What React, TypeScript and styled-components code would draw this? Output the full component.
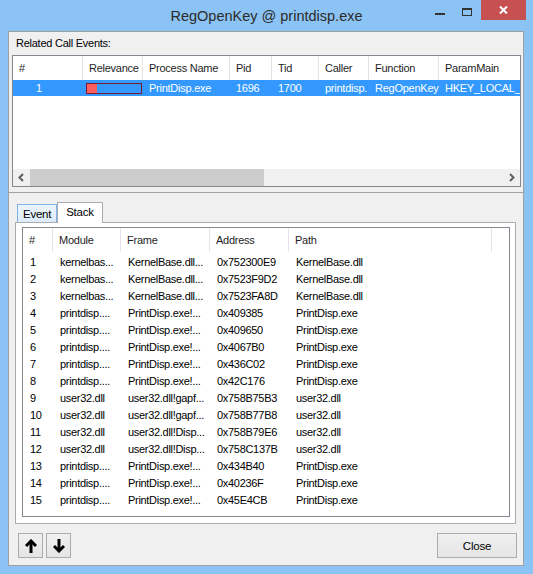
import React from "react";
import styled, { createGlobalStyle } from "styled-components";

const FRAME = "#8bc3f4";
const UI_FONT = `"Liberation Sans", Arial, sans-serif`;

const GlobalStyle = createGlobalStyle`
  html, body {
    margin: 0;
    padding: 0;
    background: ${FRAME};
  }
  body {
    font-family: ${UI_FONT};
  }
  * {
    box-sizing: border-box;
  }
`;

const Window = styled.div`
  width: 533px;
  height: 574px;
  background: ${FRAME};
  display: flex;
  flex-direction: column;
  overflow: hidden;
`;

const TitleBar = styled.div`
  height: 31px;
  flex: none;
  display: grid;
  grid-template-columns: 1fr auto 1fr;
  align-items: center;
`;

const Title = styled.div`
  grid-column: 2;
  font-size: 14.5px;
  color: #2b2b2b;
  white-space: nowrap;
`;

const Controls = styled.div`
  grid-column: 3;
  justify-self: end;
  align-self: start;
  display: flex;
  margin-right: 7px;
`;

const CaptionButton = styled.div<{ $w: number; $close?: boolean }>`
  width: ${({ $w }) => $w}px;
  height: 20px;
  display: flex;
  align-items: center;
  justify-content: center;
  background: ${({ $close }) => ($close ? "#c75050" : "transparent")};
`;

const MinGlyph = styled.span`
  width: 10px;
  height: 2px;
  margin-top: 8px;
  background: #333;
`;

const MaxGlyph = styled.span`
  width: 10px;
  height: 8px;
  margin-top: 3px;
  border: 1px solid #333;
  border-top-width: 2px;
`;

const Client = styled.div`
  flex: 1;
  min-height: 0;
  margin: 0 9px 8px 8px;
  background: #f0f0f0;
  display: flex;
  flex-direction: column;
`;

const TopPanel = styled.div`
  height: 161px;
  flex: none;
  border: 1px solid #a0a0a0;
  border-bottom: none;
  padding: 0 2px 0 3px;
  display: flex;
  flex-direction: column;
`;

const Label = styled.div`
  padding: 4px 0 0 4px;
  height: 18px;
  line-height: 14px;
  font-size: 11px;
  letter-spacing: -0.25px;
  color: #000;
`;

const ListBox = styled.div<{ $h?: number }>`
  margin-top: ${({ $h }) => ($h ? "5px" : "0")};
  height: ${({ $h }) => ($h ? `${$h}px` : "auto")};
  flex: ${({ $h }) => ($h ? "none" : "1")};
  border: 1px solid #828790;
  background: #fff;
  display: flex;
  flex-direction: column;
  overflow: hidden;
`;

const EVENT_COLS = "70px 60px 87px 42px 47px 50px 70px 140px";
const STACK_COLS = "30px 68px 89px 79px 203px 1fr";

const HeaderRow = styled.div<{ $cols: string; $h: number }>`
  flex: none;
  display: grid;
  grid-template-columns: ${({ $cols }) => $cols};
  height: ${({ $h }) => $h}px;
  background: #fff;
  border-bottom: 1px solid ${({ $h }) => ($h === 25 ? "#ffffff" : "#e5e5e5")};
`;

const HeaderCell = styled.div`
  border-right: 1px solid #e5e5e5;
  padding-left: 6px;
  display: flex;
  align-items: center;
  font-size: 11px;
  letter-spacing: -0.25px;
  color: #1e1e1e;
  white-space: nowrap;
  overflow: hidden;
  &:last-child {
    border-right: none;
  }
`;

const EventRow = styled.div`
  flex: none;
  display: grid;
  grid-template-columns: ${EVENT_COLS};
  height: 16px;
  margin-top: -1px;
  background: #3399ff;
  color: #fff;
`;

const EventCell = styled.div<{ $pad?: number }>`
  padding-left: ${({ $pad }) => $pad ?? 6}px;
  font-size: 11px;
  letter-spacing: -0.25px;
  line-height: 16px;
  white-space: nowrap;
  overflow: hidden;
`;

const RelevanceBar = styled.div`
  margin: 3px 0 0 3px;
  width: 56px;
  height: 11px;
  border: 1px solid #7a1a30;
  display: flex;
`;

const RelevanceFill = styled.div`
  background: #ff5e5e;
  height: 100%;
`;

const Spacer = styled.div`
  flex: 1;
`;

const HScroll = styled.div`
  flex: none;
  height: 17px;
  background: #f0f0f0;
  display: flex;
`;

const ScrollArrow = styled.div`
  width: 17px;
  display: flex;
  align-items: center;
  justify-content: center;
`;

const ScrollTrack = styled.div`
  flex: 1;
  display: flex;
`;

const ScrollThumb = styled.div`
  width: 234px;
  background: #cdcdcd;
`;

const BottomPanel = styled.div`
  flex: 1;
  min-height: 0;
  border: 1px solid #a0a0a0;
  padding: 9px 7px 7px 6px;
  display: flex;
  flex-direction: column;
`;

const TabStrip = styled.div`
  flex: none;
  height: 20px;
  display: flex;
  align-items: flex-end;
  padding-left: 2px;
  position: relative;
  z-index: 1;
`;

const Tab = styled.div<{ $active?: boolean }>`
  height: ${({ $active }) => ($active ? 21 : 18)}px;
  margin-bottom: ${({ $active }) => ($active ? -1 : 0)}px;
  padding: 0 ${({ $active }) => ($active ? 8 : 5)}px;
  padding-bottom: ${({ $active }) => ($active ? 2 : 0)}px;
  border: 1px solid ${({ $active }) => ($active ? "#acacac" : "#7eb4ea")};
  border-bottom: none;
  background: ${({ $active }) =>
    $active ? "#ffffff" : "linear-gradient(#ecf4fc, #dcecfc)"};
  display: flex;
  align-items: center;
  font-size: 11.5px;
  letter-spacing: -0.25px;
  color: #000;
`;

const TabPage = styled.div`
  flex: 1;
  min-height: 0;
  border: 1px solid #acacac;
  background: #fff;
  padding: 4px 5px 6px 6px;
  display: flex;
  flex-direction: column;
`;

const StackBody = styled.div`
  padding-top: 1px;
`;

const StackRow = styled.div`
  display: grid;
  grid-template-columns: ${STACK_COLS};
  height: 17px;
`;

const StackCell = styled.div`
  padding-left: 7px;
  font-size: 11px;
  letter-spacing: -0.3px;
  line-height: 17px;
  color: #000;
  white-space: nowrap;
  overflow: hidden;
`;

const ButtonRow = styled.div`
  flex: none;
  margin-top: 9px;
  padding-left: 3px;
  margin-right: -1px;
  display: flex;
  gap: 3px;
`;

const Button = styled.div<{ $w: number }>`
  width: ${({ $w }) => $w}px;
  height: 25px;
  border: 1px solid #acacac;
  background: linear-gradient(#f0f0f0, #e5e5e5);
  display: flex;
  align-items: center;
  justify-content: center;
  font-size: 11.5px;
  letter-spacing: -0.2px;
  color: #000;
  &:last-child {
    margin-left: auto;
  }
`;

const eventHeaders = [
  "#",
  "Relevance",
  "Process Name",
  "Pid",
  "Tid",
  "Caller",
  "Function",
  "ParamMain",
];

const stackHeaders = ["#", "Module", "Frame", "Address", "Path", ""];

const KB = ["kernelbas...", "KernelBase.dll...", "KernelBase.dll"];
const PD = ["printdisp....", "PrintDisp.exe!...", "PrintDisp.exe"];

const stackRows: string[][] = [
  ["1", KB[0], KB[1], "0x752300E9", KB[2]],
  ["2", KB[0], KB[1], "0x7523F9D2", KB[2]],
  ["3", KB[0], KB[1], "0x7523FA8D", KB[2]],
  ["4", PD[0], PD[1], "0x409385", PD[2]],
  ["5", PD[0], PD[1], "0x409650", PD[2]],
  ["6", PD[0], PD[1], "0x4067B0", PD[2]],
  ["7", PD[0], PD[1], "0x436C02", PD[2]],
  ["8", PD[0], PD[1], "0x42C176", PD[2]],
  ["9", "user32.dll", "user32.dll!gapf...", "0x758B75B3", "user32.dll"],
  ["10", "user32.dll", "user32.dll!gapf...", "0x758B77B8", "user32.dll"],
  ["11", "user32.dll", "user32.dll!Disp...", "0x758B79E6", "user32.dll"],
  ["12", "user32.dll", "user32.dll!Disp...", "0x758C137B", "user32.dll"],
  ["13", PD[0], PD[1], "0x434B40", PD[2]],
  ["14", PD[0], PD[1], "0x40236F", PD[2]],
  ["15", PD[0], PD[1], "0x45E4CB", PD[2]],
];

function Chevron({ dir }: { dir: "left" | "right" }) {
  const pts = dir === "left" ? "5,1 1.5,4.5 5,8" : "2,1 5.5,4.5 2,8";
  return (
    <svg width="7" height="9" viewBox="0 0 7 9">
      <polyline points={pts} fill="none" stroke="#606060" strokeWidth="2" />
    </svg>
  );
}

function Arrow({ up }: { up: boolean }) {
  return (
    <svg
      width="12"
      height="14"
      viewBox="0 0 12 14"
      style={{ transform: up ? "none" : "rotate(180deg)" }}
    >
      <polyline
        points="1,7 6,2 11,7"
        fill="none"
        stroke="#000"
        strokeWidth="3"
        strokeLinejoin="miter"
      />
      <line x1="6" y1="2" x2="6" y2="14" stroke="#000" strokeWidth="3" />
    </svg>
  );
}

export default function App() {
  return (
    <>
      <GlobalStyle />
      <Window>
        <TitleBar>
          <Title>RegOpenKey @ printdisp.exe</Title>
          <Controls>
            <CaptionButton $w={26}>
              <MinGlyph />
            </CaptionButton>
            <CaptionButton $w={28}>
              <MaxGlyph />
            </CaptionButton>
            <CaptionButton $w={45} $close>
              <svg width="9" height="8" viewBox="0 0 9 8">
                <path d="M1 0.5 L8 7.5 M8 0.5 L1 7.5" stroke="#fff" strokeWidth="2" />
              </svg>
            </CaptionButton>
          </Controls>
        </TitleBar>

        <Client>
          <TopPanel>
            <Label>Related Call Events:</Label>
            <ListBox $h={132}>
              <HeaderRow $cols={EVENT_COLS} $h={25}>
                {eventHeaders.map((h) => (
                  <HeaderCell key={h}>{h}</HeaderCell>
                ))}
              </HeaderRow>
              <EventRow>
                <EventCell $pad={23}>1</EventCell>
                <div>
                  <RelevanceBar>
                    <RelevanceFill style={{ width: "18%" }} />
                  </RelevanceBar>
                </div>
                <EventCell>PrintDisp.exe</EventCell>
                <EventCell>1696</EventCell>
                <EventCell>1700</EventCell>
                <EventCell>printdisp.</EventCell>
                <EventCell>RegOpenKey</EventCell>
                <EventCell>HKEY_LOCAL_MACHINE</EventCell>
              </EventRow>
              <Spacer />
              <HScroll>
                <ScrollArrow>
                  <Chevron dir="left" />
                </ScrollArrow>
                <ScrollTrack>
                  <ScrollThumb />
                </ScrollTrack>
                <ScrollArrow>
                  <Chevron dir="right" />
                </ScrollArrow>
              </HScroll>
            </ListBox>
          </TopPanel>

          <BottomPanel>
            <TabStrip>
              <Tab>Event</Tab>
              <Tab $active>Stack</Tab>
            </TabStrip>
            <TabPage>
              <ListBox>
                <HeaderRow $cols={STACK_COLS} $h={25}>
                  {stackHeaders.map((h, i) => (
                    <HeaderCell key={i}>{h}</HeaderCell>
                  ))}
                </HeaderRow>
                <StackBody>
                  {stackRows.map((r) => (
                    <StackRow key={r[0]}>
                      {r.map((c, i) => (
                        <StackCell key={i}>{c}</StackCell>
                      ))}
                    </StackRow>
                  ))}
                </StackBody>
              </ListBox>
            </TabPage>
            <ButtonRow>
              <Button $w={25}>
                <Arrow up />
              </Button>
              <Button $w={25}>
                <Arrow up={false} />
              </Button>
              <Button $w={80}>Close</Button>
            </ButtonRow>
          </BottomPanel>
        </Client>
      </Window>
    </>
  );
}
